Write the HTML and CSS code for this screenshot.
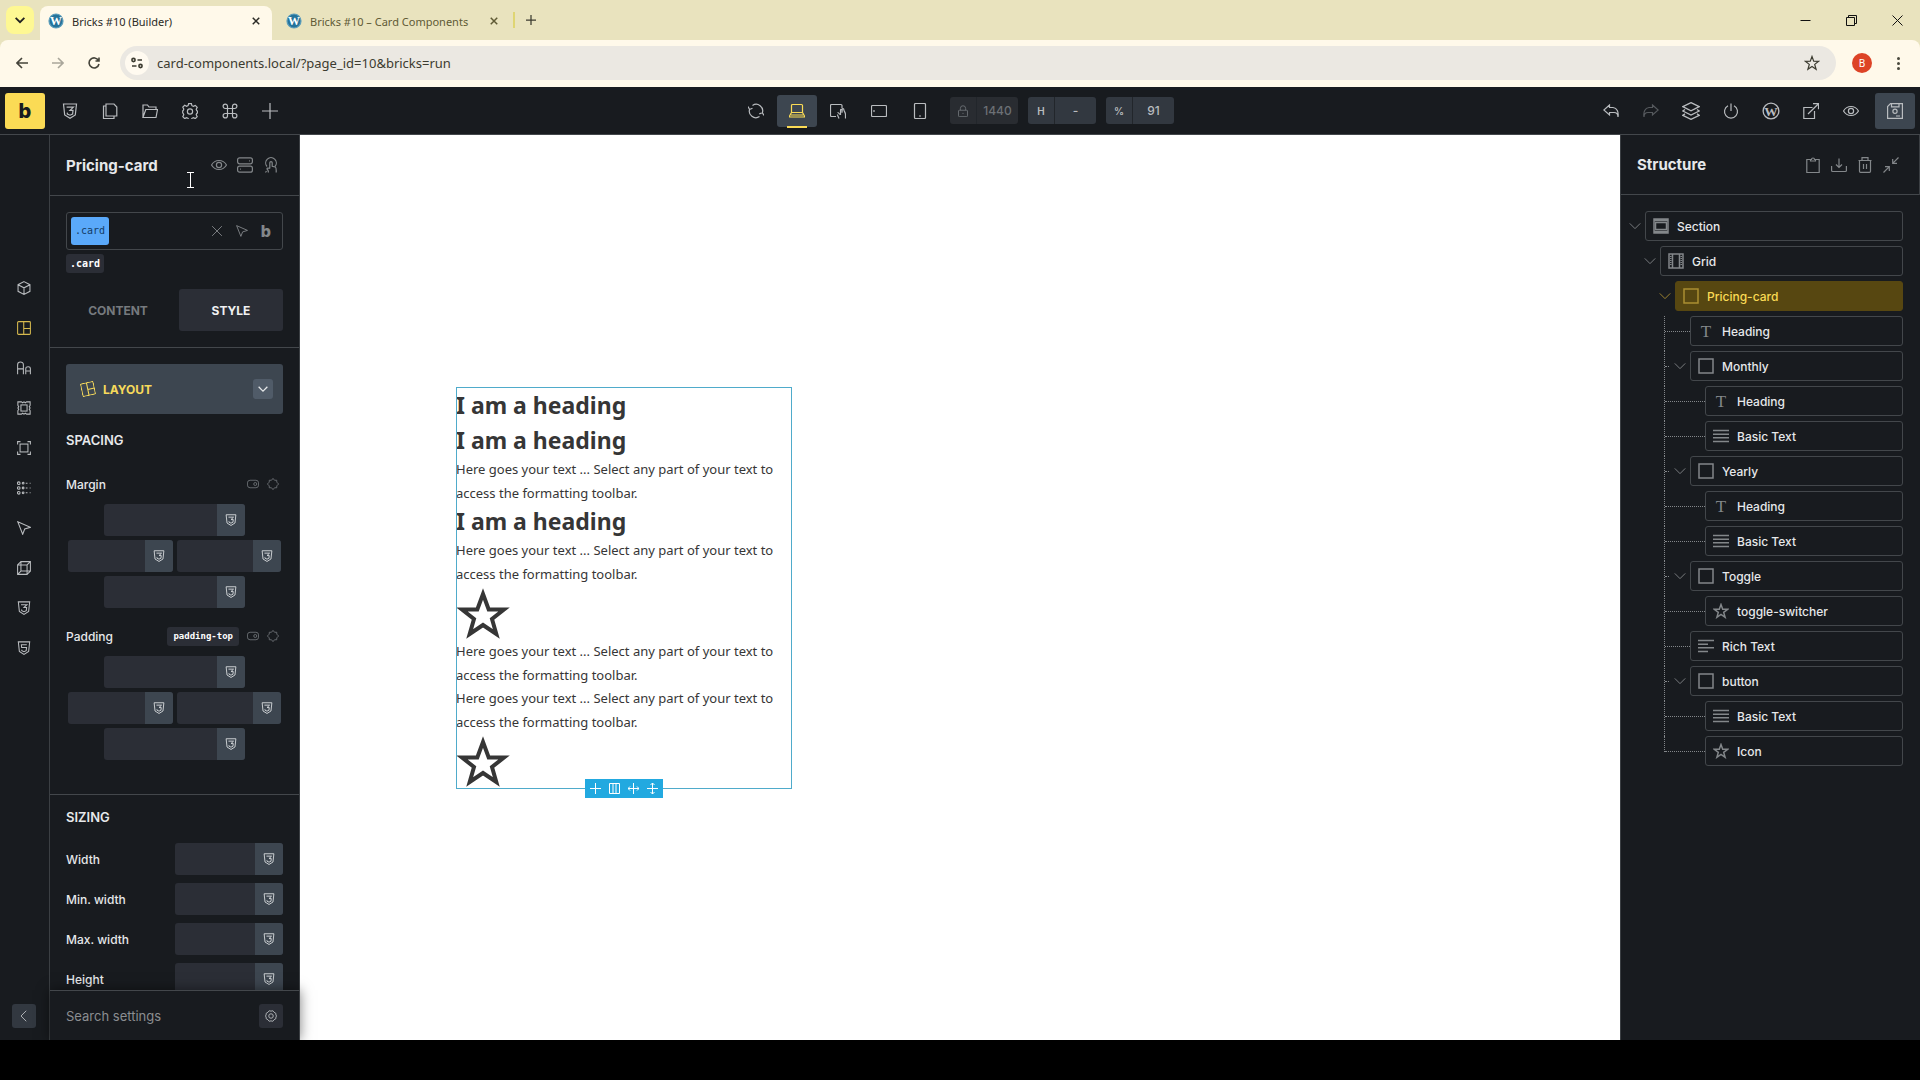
FILE: index.html
```html
<!DOCTYPE html>
<html lang="en">
<head>
<meta charset="UTF-8" />
<meta name="viewport" content="width=device-width, initial-scale=1" />
<title>Bricks #10 (Builder)</title>
<link rel="stylesheet" href="styles.css">
</head>

<body>

<!-- icon sprite -->
<svg class="sprite" aria-hidden="true">
  <symbol id="i-css" viewBox="0 0 16 16"><path d="M1.5 1h13l-1.2 11L8 15.3 2.7 12z"/><path d="M4.6 4.2h6.8L8 7.4h3l-.4 3.6L8 12.2 5.400 11l-.2-1.300"/></symbol>
  <symbol id="i-html" viewBox="0 0 16 16"><path d="M1.5 1h13l-1.2 11L8 15.3 2.7 12z"/><path d="M11.200 4.200H5l.3 3.200h5.600l-.4 3.600L8 12.200 5.500 11l-.1-1"/></symbol>
  <symbol id="i-pages" viewBox="0 0 16 16"><path d="M4 1h8l2.800 3v9H4zM4 3H1.500v12.500H12V13"/></symbol>
  <symbol id="i-folder" viewBox="0 0 16 16"><path d="M1 14V2h4.500l1.500 2h7v2.500M1 14.300 3.800 6.500h11.700l-1.500 8z"/></symbol>
  <symbol id="i-gear" viewBox="0 0 16 16"><path d="M6.600.7h2.800l.5 2 1.500.7 1.900-1 1.900 1.900-1 1.900.6 1.500.7.300v2l-.7.300-.6 1.500 1 1.900-1.900 1.900-1.900-1-1.500.7-.5 2H6.600l-.5-2-1.500-.7-1.900 1-1.900-1.900 1-1.900-.6-1.500-.5-.3V7.900l.5-.3.6-1.500-1-1.900 1.900-1.900 1.900 1 1.500-.7z"/><circle cx="8" cy="8.500" r="2.600"/></symbol>
  <symbol id="i-cmd" viewBox="0 0 16 16"><path d="M5.500 5.500h5v5h-5zM5.500 5.500V3.300a2.200 2.200 0 1 0-2.200 2.200zM10.500 5.500V3.300a2.200 2.200 0 1 1 2.200 2.200zM5.500 10.500v2.200a2.200 2.200 0 1 1-2.200-2.200zM10.500 10.500v2.200a2.200 2.200 0 1 0 2.200-2.200z"/></symbol>
  <symbol id="i-plus" viewBox="0 0 16 16"><path d="M8 0v16M0 8h16"/></symbol>
  <symbol id="i-sync" viewBox="0 0 16 16"><path d="M4.500 2.500a6.500 6.500 0 0 1 9.800 7.500M11.500 13.500A6.500 6.500 0 0 1 1.700 6M0 3.500l1.500 3 3-1.200M16 12.500l-1.700-2.800-3 1.200"/></symbol>
  <symbol id="i-laptop" viewBox="0 0 16 16"><path d="M2.500 9.500v-7a1 1 0 0 1 1-1h9a1 1 0 0 1 1 1v7zM2.500 9.500.6 13v1h14.800v-1l-1.900-3.500M2 12h12"/></symbol>
  <symbol id="i-touch" viewBox="0 0 16 16"><path d="M6 13.500H1.500a1 1 0 0 1-1-1v-10a1 1 0 0 1 1-1H11a1 1 0 0 1 1 1V5M7.500 9.500c1.500 0 1.500 2 3 2V7.200c0-1 1.500-1 1.500 0v2.500M12 9.700l.2-3.200c0-1.300 1.600-1 1.600 0 .2 2 1.700 3 1.700 5v4M9 15.500c-.5-2-1.500-2.500-1.500-4"/></symbol>
  <symbol id="i-land" viewBox="0 0 16 16"><rect x=".5" y="2.500" width="15" height="11" rx="1"/><path d="M3 7v2"/></symbol>
  <symbol id="i-phone" viewBox="0 0 16 16"><rect x="2.500" y=".5" width="11" height="15" rx="1"/><path d="M7 13h2"/></symbol>
  <symbol id="i-lock" viewBox="0 0 16 16"><rect x="2" y="7" width="12" height="8.500" rx="1"/><path d="M4.500 7V4.500a3.500 3.500 0 0 1 7 0V7M8 10.500v1.500"/></symbol>
  <symbol id="i-undo" viewBox="0 0 16 16"><path d="M6.500 2 .8 7l5.700 5V9.500H11c2.500 0 4 1.500 4 4.500.8-5-1-9-5-9.500H6.500z"/></symbol>
  <symbol id="i-redo" viewBox="0 0 16 16"><path d="m9.500 2 5.700 5-5.700 5V9.500H5c-2.500 0-4 1.500-4 4.500-.8-5 1-9 5-9.500h3.500z"/></symbol>
  <symbol id="i-layers" viewBox="0 0 16 16"><path d="m8 .6 7.300 3.600L8 7.800.7 4.200zM2.700 6.700.7 8 8 11.600 15.300 8l-2-1.300M2.700 10.500l-2 1.300L8 15.400l7.300-3.600-2-1.300"/></symbol>
  <symbol id="i-power" viewBox="0 0 16 16"><path d="M5 2.800a6.500 6.500 0 1 0 6 0M8 .5V8"/></symbol>
  <symbol id="i-ext" viewBox="0 0 16 16"><path d="M9.500 4.500H.8v11h10.700V8M5 11 15.500.7M10 .7h5.500v5.500"/></symbol>
  <symbol id="i-eye" viewBox="0 0 16 16"><path d="M.5 8C4 2 12 2 15.500 8 12 14 4 14 .5 8z"/><circle cx="8" cy="8" r="2.600"/></symbol>
  <symbol id="i-save" viewBox="0 0 16 16"><path d="M3.500.6h11.900v14.800H.6V3.500zM4.500.8v3h7.500v-3M9 13h4"/><circle cx="8" cy="8.300" r="2.100"/></symbol>
  <symbol id="i-clip" viewBox="0 0 16 16"><path d="M5.500 2.500H1.800v13h12.400v-13h-3.700M5.500 4V2.500h1a1.500 1.500 0 0 1 3 0h1V4z"/></symbol>
  <symbol id="i-down" viewBox="0 0 16 16"><path d="M8 1.500v9M5 7.500l3 3 3-3M.6 9v4.500a1 1 0 0 0 1 1h12.800a1 1 0 0 0 1-1V9"/></symbol>
  <symbol id="i-trash" viewBox="0 0 16 16"><path d="M1.500 3.500h13M5 3.500V.7h6v2.800M2.500 3.500v10.800a1 1 0 0 0 1 1h9a1 1 0 0 0 1-1V3.500M6.500 7v5M9.500 7v5"/></symbol>
  <symbol id="i-shrink" viewBox="0 0 16 16"><path d="M15.500.5 9.700 6.300M9.700 2v4.300H14M.5 15.500l5.800-5.800M2 9.700h4.300V14"/></symbol>
  <symbol id="i-switches" viewBox="0 0 16 16"><rect x=".6" y=".8" width="14.800" height="6" rx="2"/><rect x=".6" y="9.200" width="14.800" height="6" rx="2"/><path d="M12 3.800h.8M3.200 12.200H4"/></symbol>
  <symbol id="i-hand" viewBox="0 0 16 16"><path d="M4 9.500a5.300 5.300 0 1 1 8 0M6.800 11.500V5.700c0-1.500 2.400-1.500 2.400 0v3.600l3 .7c1.300.5 1 2 1 5.500M6.800 11.500 5 11c-1.500 0-1 1.500 0 2.200l.5 2.300M3.500 14l-1 1.500"/></symbol>
  <symbol id="i-x" viewBox="0 0 16 16"><path d="m1.500 1.500 13 13M14.500 1.500l-13 13"/></symbol>
  <symbol id="i-cursor" viewBox="0 0 16 16"><path d="m.8.800 14.500 6.400-6.500 2-2.300 6z"/></symbol>
  <symbol id="i-cube" viewBox="0 0 16 16"><path d="m8 .7 6.800 3.500v7.600L8 15.300l-6.800-3.500V4.200zM1.200 4.200 8 7.800l6.800-3.600M8 7.800v7.500"/></symbol>
  <symbol id="i-layout" viewBox="0 0 16 16"><rect x=".7" y=".7" width="14.600" height="14.600" rx="1"/><path d="M7.700.7v14.600M7.700 8.500h7.600"/></symbol>
  <symbol id="i-type" viewBox="0 0 16 16"><path d="M.7 15V4.200C.7 0 7.300 0 7.300 4.200V15M.7 9h6.600M10 15V8.800c0-3 5.300-3 5.300 0V15M10 11.500h5.300"/></symbol>
  <symbol id="i-bg" viewBox="0 0 16 16"><rect x="4.500" y="4.500" width="7" height="7"/><path d="M1 5V1h4l1.500 1L8 1l1.500 1L11 1h4v4l-1 1.500L15 8l-1 1.500 1 1.500v4h-4l-1.500-1L8 15l-1.500-1L5 15H1v-4l1-1.500L1 8l1-1.500z"/></symbol>
  <symbol id="i-border" viewBox="0 0 16 16"><rect x="3.500" y="3.500" width="9" height="9"/><path d="M.7 4V.7H4M12 .7h3.300V4M15.300 12v3.300H12M4 15.300H.7V12"/></symbol>
  <symbol id="i-dots" viewBox="0 0 16 16"><circle cx="2" cy="2.500" r="1.500"/><circle cx="2" cy="8" r="1.500"/><circle cx="2" cy="13.500" r="1.500"/><circle cx="7" cy="2.500" r="1"/><circle cx="7" cy="8" r="1"/><circle cx="7" cy="13.500" r="1"/><path d="M10 2.500h2M10 8h2M10 13.500h2M14.500 2.500h1M14.500 8h1M14.500 13.500h1"/></symbol>
  <symbol id="i-box3d" viewBox="0 0 16 16"><path d="M.7 4.500h10.800v10.800H.7zM4.500.7h10.800v10.800H4.500zM.7 4.500 4.500.7M11.500 4.500 15.300.7M.7 15.300l3.800-3.800M11.500 15.300l3.800-3.800"/></symbol>
  <symbol id="i-left" viewBox="0 0 16 16"><path d="M11 1 4 8l7 7"/></symbol>
  <symbol id="i-chev" viewBox="0 0 16 16"><path d="m1 4.500 7 7 7-7"/></symbol>
  <symbol id="i-toggle" viewBox="0 0 16 16"><rect x=".6" y="3" width="14.800" height="10" rx="3.500"/><circle cx="11" cy="8" r="2"/></symbol>
  <symbol id="i-sides" viewBox="0 0 16 16"><path d="M3 5.500V3h3l2-2.500L10 3h3v2.500L15.500 8 13 10.500V13h-3l-2 2.500L6 13H3v-2.500L.5 8z"/></symbol>
  <symbol id="i-nut" viewBox="0 0 16 16"><path d="m5.500 1 2.500.5 2.500-.5 1.500 2 2.500 1.500v2.200L15.500 8l-1 1.300v2.200L12 13l-1.500 2-2.500-.5-2.500.5L4 13l-2.500-1.500V9.300L.5 8l1-1.300V4.500L4 3z"/><circle cx="8" cy="8" r="3"/></symbol>
  <symbol id="i-section" viewBox="0 0 16 16"><path d="M1 1h14v14H1zM1 2.500h14M1 13.500h14"/><rect x="2.500" y="4.500" width="11" height="7"/></symbol>
  <symbol id="i-grid" viewBox="0 0 16 16"><rect x="1" y="1" width="14" height="14"/><path d="M4.500 1v14M11.500 1v14"/><path d="M2.800 3v10M13.200 3v10" stroke-dasharray="1 1"/></symbol>
  <symbol id="i-div" viewBox="0 0 16 16"><rect x="1" y="1" width="14" height="14"/></symbol>
  <symbol id="i-basic" viewBox="0 0 16 16"><path d="M0 2.500h16M0 6.200h16M0 9.800h16M0 13.500h16"/></symbol>
  <symbol id="i-rich" viewBox="0 0 16 16"><path d="M0 2.500h16M0 6.200h10M0 9.800h16M0 13.500h10"/></symbol>
  <symbol id="i-star" viewBox="0 0 16 16"><path d="m8 1.500 1.700 4.700 5 .1-4 3.100 1.400 4.900L8 11.500l-4.100 2.800 1.400-4.900-4-3.100 5-.1z"/></symbol>
  <symbol id="i-bigstar" viewBox="0 0 55 55"><path d="m27 9 5.700 15.500H48L36 34l4.300 15L27 40 13.700 49 18 34 6 24.500h15.300z"/></symbol>
</svg>

<header class="chrome">
  <div class="tabstrip">
    <button class="tab-search" aria-label="Search tabs"><svg class="icon s10"><use href="#i-chev"/></svg></button>
    <div class="tab active">
      <svg class="icon s16 favicon" viewBox="0 0 16 16"><circle cx="8" cy="8" r="7"/><text x="8" y="12">W</text></svg>
      <span class="tab-title">Bricks #10 (Builder)</span>
      <button aria-label="Close tab"><svg class="icon s8"><use href="#i-x"/></svg></button>
    </div>
    <div class="tab">
      <svg class="icon s16 favicon" viewBox="0 0 16 16"><circle cx="8" cy="8" r="7"/><text x="8" y="12">W</text></svg>
      <span class="tab-title">Bricks #10 – Card Components</span>
      <button aria-label="Close tab"><svg class="icon s8"><use href="#i-x"/></svg></button>
    </div>
    <button class="new-tab" aria-label="New tab"><svg class="icon s10"><use href="#i-plus"/></svg></button>
    <div class="window-controls">
      <button aria-label="Minimize"><svg viewBox="0 0 11 11"><path d="M.5 5.500h10"/></svg></button>
      <button aria-label="Restore"><svg viewBox="0 0 11 11"><path d="M.5 2.500h8v8h-8zM2.500 2.500v-2h8v8h-2"/></svg></button>
      <button aria-label="Close"><svg viewBox="0 0 11 11"><path d="m.5.500 10 10M10.500.5l-10 10"/></svg></button>
    </div>
  </div>

  <div class="navbar">
    <button class="nav" aria-label="Back"><svg viewBox="0 0 12 12"><path d="M12 6H1M6 1 1 6l5 5"/></svg></button>
    <button class="nav off" aria-label="Forward"><svg viewBox="0 0 12 12"><path d="M0 6h11M6 1l5 5-5 5"/></svg></button>
    <button class="nav" aria-label="Reload"><svg viewBox="0 0 12 12"><path d="M10.500 3.500A5 5 0 1 0 11 7M11 .5V4H7.500"/></svg></button>
    <div class="omnibox">
      <button class="site-info" aria-label="Site information"><svg viewBox="0 0 12 12"><circle cx="2.500" cy="3" r="1.600"/><path d="M6.500 3H11M1 9h4.500"/><circle cx="9.500" cy="9" r="1.600"/></svg></button>
      <input type="text" value="card-components.local/?page_id=10&amp;bricks=run" aria-label="Address">
      <button aria-label="Bookmark"><svg class="icon s16"><use href="#i-star"/></svg></button>
    </div>
    <button class="avatar" aria-label="Profile">B</button>
    <button class="menu" aria-label="Menu"><i></i><i></i><i></i></button>
  </div>
</header>

<nav class="topbar">
  <div class="group">
    <button class="logo" aria-label="Bricks">b</button>
    <button aria-label="Global CSS"><svg class="icon s16"><use href="#i-css"/></svg></button>
    <button aria-label="Pages"><svg class="icon s16"><use href="#i-pages"/></svg></button>
    <button aria-label="Templates"><svg class="icon s16"><use href="#i-folder"/></svg></button>
    <button aria-label="Settings"><svg class="icon s16"><use href="#i-gear"/></svg></button>
    <button aria-label="Commands"><svg class="icon s16"><use href="#i-cmd"/></svg></button>
    <button aria-label="Add element"><svg class="icon s16"><use href="#i-plus"/></svg></button>
  </div>

  <div class="group center">
    <button aria-label="Reload canvas"><svg class="icon s16"><use href="#i-sync"/></svg></button>
    <button class="active" aria-label="Desktop"><svg class="icon s16"><use href="#i-laptop"/></svg></button>
    <button aria-label="Tablet"><svg class="icon s16"><use href="#i-touch"/></svg></button>
    <button aria-label="Mobile landscape"><svg class="icon s16"><use href="#i-land"/></svg></button>
    <button aria-label="Mobile portrait"><svg class="icon s16"><use href="#i-phone"/></svg></button>
    <div class="dims">
      <label class="dim off"><span><svg class="icon s12"><use href="#i-lock"/></svg></span><input type="text" value="1440" aria-label="Width" disabled></label>
      <label class="dim"><span>H</span><input type="text" value="-"></label>
      <label class="dim"><span>%</span><input type="text" value="91"></label>
    </div>
  </div>

  <div class="group right">
    <button aria-label="Undo"><svg class="icon s16"><use href="#i-undo"/></svg></button>
    <button class="off" aria-label="Redo"><svg class="icon s16"><use href="#i-redo"/></svg></button>
    <button aria-label="Structure"><svg class="icon s18"><use href="#i-layers"/></svg></button>
    <button aria-label="Power"><svg class="icon s16"><use href="#i-power"/></svg></button>
    <button aria-label="WordPress"><svg class="icon s18 wp" viewBox="0 0 16 16"><circle cx="8" cy="8" r="7"/><text x="8" y="12">W</text></svg></button>
    <button aria-label="View page"><svg class="icon s16"><use href="#i-ext"/></svg></button>
    <button aria-label="Preview"><svg class="icon s16"><use href="#i-eye"/></svg></button>
    <button class="save" aria-label="Save"><svg class="icon s16"><use href="#i-save"/></svg></button>
  </div>
</nav>

<main class="builder">
  <aside class="rail">
    <div class="rail-icons">
      <button aria-label="Content"><svg class="icon s14"><use href="#i-cube"/></svg></button>
      <button class="active" aria-label="Layout"><svg class="icon s14"><use href="#i-layout"/></svg></button>
      <button aria-label="Typography"><svg class="icon s14"><use href="#i-type"/></svg></button>
      <button aria-label="Background"><svg class="icon s14"><use href="#i-bg"/></svg></button>
      <button aria-label="Border"><svg class="icon s14"><use href="#i-border"/></svg></button>
      <button aria-label="Gradient"><svg class="icon s14"><use href="#i-dots"/></svg></button>
      <button aria-label="Shapes"><svg class="icon s14"><use href="#i-cursor"/></svg></button>
      <button aria-label="Transform"><svg class="icon s14"><use href="#i-box3d"/></svg></button>
      <button aria-label="CSS"><svg class="icon s14"><use href="#i-css"/></svg></button>
      <button aria-label="Attributes"><svg class="icon s14"><use href="#i-html"/></svg></button>
    </div>
    <button class="square slate" aria-label="Collapse"><svg class="icon s12"><use href="#i-left"/></svg></button>
  </aside>

  <section class="panel">
    <div class="panel-head">
      <h2>Pricing-card</h2>
      <div class="actions">
        <button aria-label="Visibility"><svg class="icon s16"><use href="#i-eye"/></svg></button>
        <button aria-label="Conditions"><svg class="icon s16"><use href="#i-switches"/></svg></button>
        <button aria-label="Interactions"><svg class="icon s16"><use href="#i-hand"/></svg></button>
      </div>
      <svg class="ibeam" viewBox="0 0 7 16"><path d="M0 .5h7M3.500 0v16M0 15.500h7"/></svg>
    </div>

    <div class="panel-body">
      <div class="block">
        <div class="class-box">
          <span class="chip">.card</span>
          <button aria-label="Clear"><svg class="icon s12"><use href="#i-x"/></svg></button>
          <button aria-label="States"><svg class="icon s12"><use href="#i-cursor"/></svg></button>
          <button class="b" aria-label="Class manager">b</button>
        </div>
        <code class="tag">.card</code>
        <div class="switch">
          <button>CONTENT</button>
          <button class="active">STYLE</button>
        </div>
      </div>

      <div class="block layout">
        <button class="accordion"><svg class="icon s14 tilt"><use href="#i-layout"/></svg>LAYOUT<span><svg class="icon s10"><use href="#i-chev"/></svg></span></button>
        <h3>SPACING</h3>
        <div class="control-head">
          <span>Margin</span>
          <svg class="icon s12"><use href="#i-toggle"/></svg>
          <svg class="icon s12"><use href="#i-sides"/></svg>
        </div>
        <div class="sides">
          <div class="field wide"><input type="text" aria-label="Margin top"><button aria-label="Variable"><svg class="icon s12"><use href="#i-css"/></svg></button></div>
          <div class="field"><input type="text" aria-label="Margin left"><button aria-label="Variable"><svg class="icon s12"><use href="#i-css"/></svg></button></div>
          <div class="field"><input type="text" aria-label="Margin right"><button aria-label="Variable"><svg class="icon s12"><use href="#i-css"/></svg></button></div>
          <div class="field wide"><input type="text" aria-label="Margin bottom"><button aria-label="Variable"><svg class="icon s12"><use href="#i-css"/></svg></button></div>
        </div>
        <div class="control-head second">
          <span>Padding</span>
          <code class="tag small">padding-top</code>
          <svg class="icon s12"><use href="#i-toggle"/></svg>
          <svg class="icon s12"><use href="#i-sides"/></svg>
        </div>
        <div class="sides">
          <div class="field wide"><input type="text" aria-label="Padding top"><button aria-label="Variable"><svg class="icon s12"><use href="#i-css"/></svg></button></div>
          <div class="field"><input type="text" aria-label="Padding left"><button aria-label="Variable"><svg class="icon s12"><use href="#i-css"/></svg></button></div>
          <div class="field"><input type="text" aria-label="Padding right"><button aria-label="Variable"><svg class="icon s12"><use href="#i-css"/></svg></button></div>
          <div class="field wide"><input type="text" aria-label="Padding bottom"><button aria-label="Variable"><svg class="icon s12"><use href="#i-css"/></svg></button></div>
        </div>
      </div>

      <div class="block sizing">
        <h3>SIZING</h3>
        <div class="size-row"><label for="width">Width</label><div class="field"><input type="text" id="width"><button aria-label="Variable"><svg class="icon s12"><use href="#i-css"/></svg></button></div></div>
        <div class="size-row"><label for="minWidth">Min. width</label><div class="field"><input type="text" id="minWidth"><button aria-label="Variable"><svg class="icon s12"><use href="#i-css"/></svg></button></div></div>
        <div class="size-row"><label for="maxWidth">Max. width</label><div class="field"><input type="text" id="maxWidth"><button aria-label="Variable"><svg class="icon s12"><use href="#i-css"/></svg></button></div></div>
        <div class="size-row"><label for="height">Height</label><div class="field"><input type="text" id="height"><button aria-label="Variable"><svg class="icon s12"><use href="#i-css"/></svg></button></div></div>
      </div>
    </div>

    <div class="panel-foot">
      <input type="text" placeholder="Search settings" aria-label="Search settings">
      <button class="square" aria-label="Settings"><svg class="icon s12"><use href="#i-nut"/></svg></button>
    </div>
  </section>

  <section class="canvas">
    <div class="container">
      <article class="card">
        <h1>I am a heading</h1>
        <h1>I am a heading</h1>
        <p>Here goes your text ... Select any part of your text to access the formatting toolbar.</p>
        <h1>I am a heading</h1>
        <p>Here goes your text ... Select any part of your text to access the formatting toolbar.</p>
        <svg class="big-star"><use href="#i-bigstar"/></svg>
        <p>Here goes your text ... Select any part of your text to access the formatting toolbar.</p>
        <p>Here goes your text ... Select any part of your text to access the formatting toolbar.</p>
        <svg class="big-star"><use href="#i-bigstar"/></svg>
        <div class="node-toolbar">
          <button aria-label="Add"><svg viewBox="0 0 11 11"><path d="M5.500 0v11M0 5.500h11"/></svg></button>
          <button aria-label="Columns"><svg viewBox="0 0 11 11"><path d="M.5.500h10v10H.5zM4 .5v10M7 .5v10"/></svg></button>
          <button aria-label="Stretch"><svg viewBox="0 0 11 11"><path d="M5.500 0v11M0 5.500h11M2 3.500l-2 2 2 2M9 3.500l2 2-2 2"/></svg></button>
          <button aria-label="Align"><svg viewBox="0 0 11 11"><path d="M0 5.500h11M5.500 0v11M3.500 2l2-2 2 2M3.500 9l2 2 2-2"/></svg></button>
        </div>
      </article>
    </div>
  </section>

  <aside class="structure">
    <div class="panel-head">
      <h2>Structure</h2>
      <div class="actions">
        <button aria-label="Paste"><svg class="icon s16"><use href="#i-clip"/></svg></button>
        <button aria-label="Import"><svg class="icon s16"><use href="#i-down"/></svg></button>
        <button aria-label="Delete"><svg class="icon s16"><use href="#i-trash"/></svg></button>
        <button aria-label="Collapse all"><svg class="icon s16"><use href="#i-shrink"/></svg></button>
      </div>
    </div>
    <ul class="tree">
      <li class="l0"><button class="fold" aria-label="Toggle"><svg class="icon s12"><use href="#i-chev"/></svg></button><a href="#"><svg class="icon s16"><use href="#i-section"/></svg>Section</a></li>
      <li class="l1"><button class="fold" aria-label="Toggle"><svg class="icon s12"><use href="#i-chev"/></svg></button><a href="#"><svg class="icon s16"><use href="#i-grid"/></svg>Grid</a></li>
      <li class="l2 active"><button class="fold" aria-label="Toggle"><svg class="icon s12"><use href="#i-chev"/></svg></button><a href="#"><svg class="icon s16"><use href="#i-div"/></svg>Pricing-card</a></li>
      <li class="l3"><i class="stem"></i><a href="#"><svg class="icon s16 letter" viewBox="0 0 16 16"><text x="8" y="14">T</text></svg>Heading</a></li>
      <li class="l3 open"><i class="stem"></i><button class="fold" aria-label="Toggle"><svg class="icon s12"><use href="#i-chev"/></svg></button><a href="#"><svg class="icon s16"><use href="#i-div"/></svg>Monthly</a></li>
      <li class="l4"><i class="stem"></i><a href="#"><svg class="icon s16 letter" viewBox="0 0 16 16"><text x="8" y="14">T</text></svg>Heading</a></li>
      <li class="l4"><i class="stem"></i><a href="#"><svg class="icon s16"><use href="#i-basic"/></svg>Basic Text</a></li>
      <li class="l3 open"><i class="stem"></i><button class="fold" aria-label="Toggle"><svg class="icon s12"><use href="#i-chev"/></svg></button><a href="#"><svg class="icon s16"><use href="#i-div"/></svg>Yearly</a></li>
      <li class="l4"><i class="stem"></i><a href="#"><svg class="icon s16 letter" viewBox="0 0 16 16"><text x="8" y="14">T</text></svg>Heading</a></li>
      <li class="l4"><i class="stem"></i><a href="#"><svg class="icon s16"><use href="#i-basic"/></svg>Basic Text</a></li>
      <li class="l3 open"><i class="stem"></i><button class="fold" aria-label="Toggle"><svg class="icon s12"><use href="#i-chev"/></svg></button><a href="#"><svg class="icon s16"><use href="#i-div"/></svg>Toggle</a></li>
      <li class="l4"><i class="stem"></i><a href="#"><svg class="icon s16"><use href="#i-star"/></svg>toggle-switcher</a></li>
      <li class="l3"><i class="stem"></i><a href="#"><svg class="icon s16"><use href="#i-rich"/></svg>Rich Text</a></li>
      <li class="l3 open"><i class="stem"></i><button class="fold" aria-label="Toggle"><svg class="icon s12"><use href="#i-chev"/></svg></button><a href="#"><svg class="icon s16"><use href="#i-div"/></svg>button</a></li>
      <li class="l4"><i class="stem"></i><a href="#"><svg class="icon s16"><use href="#i-basic"/></svg>Basic Text</a></li>
      <li class="l4 last"><i class="stem"></i><a href="#"><svg class="icon s16"><use href="#i-star"/></svg>Icon</a></li>
    </ul>
  </aside>
</main>

</body>
</html>
```

FILE: styles.css
```css
* {
  box-sizing: border-box;
}

body {
  margin: 0;
  height: 100vh;
  padding-bottom: 40px;
  display: flex;
  flex-direction: column;
  overflow: hidden;
  background: #000;
  color: #e6e8ea;
  font-family: Inter, sans-serif;
  font-size: 13px;
}

h1, h2, h3, p, ul {
  margin: 0;
  padding: 0;
}

button {
  display: flex;
  align-items: center;
  justify-content: center;
  flex: none;
  padding: 0;
  border: none;
  background: none;
  color: inherit;
  font: inherit;
  cursor: pointer;
}

input {
  min-width: 0;
  padding: 0;
  border: none;
  outline: none;
  background: none;
  color: inherit;
  font: inherit;
}

svg {
  flex: none;
  fill: none;
  stroke: currentColor;
}

.sprite {
  position: absolute;
  width: 0;
  height: 0;
}

.icon { stroke-width: 1.2; }
.s8 { width: 8px; height: 8px; }
.s10 { width: 10px; height: 10px; }
.s12 { width: 12px; height: 12px; }
.s14 { width: 14px; height: 14px; }
.s16 { width: 16px; height: 16px; }
.s18 { width: 18px; height: 18px; }

.icon text {
  fill: currentColor;
  stroke: none;
  font-family: "Liberation Serif", serif;
  font-size: 12px;
  font-weight: 700;
  text-anchor: middle;
}

.favicon {
  color: #fff;
}

.favicon circle {
  fill: #25739b;
  stroke: #5b9dbb;
}

.letter text {
  font-size: 17px;
  font-weight: 400;
}

/* browser window */
.chrome {
  background: #e9e3be;
  color: #3c3b30;
  font-family: "Noto Sans", sans-serif;
}

.tabstrip {
  display: flex;
  height: 40px;
  padding: 6px 0 0 6px;
}

.tab-search {
  width: 28px;
  height: 28px;
  margin-right: 6px;
  border-radius: 8px;
  background: #fef893;
  color: #222;
}

.tab-search .icon {
  stroke-width: 3;
}

.tab {
  display: flex;
  align-items: center;
  width: 232px;
  margin-right: 6px;
  padding: 0 12px 4px 8px;
  border-radius: 8px 8px 0 0;
  color: #5f5a35;
  font-size: 11px;
}

.tab.active {
  background: #fff9ea;
  color: #2b2b26;
}

.tab-title {
  flex: 1;
  padding-left: 8px;
  white-space: nowrap;
}

.tab .s8 {
  stroke-width: 3;
}

.new-tab {
  gap: 11px;
  width: 24px;
  height: 28px;
  margin-left: -4px;
}

.new-tab::before {
  content: "";
  width: 2px;
  height: 16px;
  background: #dfd573;
}

.new-tab .icon {
  stroke-width: 2;
}

.window-controls {
  display: flex;
  margin-left: auto;
  height: 28px;
  color: #111;
}

.window-controls button {
  width: 46px;
}

.window-controls svg {
  width: 11px;
  height: 11px;
}

.navbar {
  display: flex;
  align-items: center;
  height: 47px;
  padding: 0 14px 1px 4px;
  border-radius: 8px 8px 0 0;
  background: #fff9ea;
}

.nav {
  width: 36px;
  height: 34px;
  color: #45443a;
}

.nav.off {
  color: #aaa79b;
}

.nav svg {
  width: 12px;
  height: 12px;
  stroke-width: 1.6;
}

.omnibox {
  display: flex;
  align-items: center;
  flex: 1;
  height: 34px;
  margin: 0 16px 0 8px;
  padding: 0 16px 0 5px;
  border-radius: 17px;
  background: #ebe8e2;
}

.site-info {
  width: 24px;
  height: 24px;
  border-radius: 12px;
  background: #fffaf0;
}

.site-info svg {
  width: 12px;
  height: 12px;
  stroke-width: 1.6;
}

.omnibox input {
  flex: 1;
  margin-left: 8px;
  font-size: 13px;
}

.avatar {
  width: 20px;
  height: 20px;
  border-radius: 10px;
  background: #dd4326;
  color: #fff;
  font-size: 10px;
}

.menu {
  flex-direction: column;
  gap: 2px;
  width: 16px;
  margin-left: 18px;
}

.menu i {
  width: 3px;
  height: 3px;
  border-radius: 2px;
  background: #4a493d;
}

/* builder toolbar */
.topbar {
  display: grid;
  grid-template-columns: 1fr auto 1fr;
  height: 48px;
  padding: 0 5px;
  border-bottom: 1px solid #43474b;
  background: #181b1f;
  color: #b9bcbf;
}

.group {
  display: flex;
  align-items: center;
}

.group button {
  width: 40px;
  height: 36px;
}

.group .logo {
  margin-right: 5px;
  border-radius: 3px;
  background: #fbdb55;
  color: #181b1f;
  font-size: 20px;
  font-weight: 800;
}

.center {
  gap: 1px;
  padding-right: 10px;
}

.center button {
  height: 32px;
}

.center .active {
  position: relative;
  border-radius: 3px;
  background: #3d4650;
  color: #fbdb55;
}

.center .active::after {
  content: "";
  position: absolute;
  bottom: -1px;
  left: 10px;
  width: 20px;
  height: 2px;
  background: #fbdb55;
}

.dims {
  display: flex;
  gap: 10px;
  margin-left: 9px;
}

.dim {
  display: flex;
  width: 68px;
  height: 27px;
  border-radius: 3px;
  background: #323840;
  font-size: 12px;
  font-weight: 500;
}

.dim span {
  display: flex;
  align-items: center;
  justify-content: center;
  width: 27px;
  border-right: 1px solid #22262b;
  font-size: 10px;
  font-weight: 600;
}

.dim input {
  flex: 1;
  text-align: center;
}

.dim.off {
  background: #292c31;
  color: #6c7075;
}

.right {
  justify-content: flex-end;
}

.right .off {
  color: #55595d;
}

.right .save {
  border-radius: 3px;
  background: #3d4650;
  margin-left: 4px;
}

/* left side */
.builder {
  display: flex;
  flex: 1;
  min-height: 0;
}

.rail {
  display: flex;
  flex-direction: column;
  align-items: center;
  justify-content: space-between;
  width: 50px;
  padding: 133px 1px 12px 0;
  border-right: 1px solid #3b3f43;
  background: #181b1f;
  color: #b9bcbf;
}

.rail-icons button {
  width: 40px;
  height: 40px;
}

.rail-icons .active {
  color: #d6b94e;
}

.square {
  width: 24px;
  height: 24px;
  border-radius: 3px;
  background: #2b2e36;
  color: #b9bcbf;
}

.slate {
  background: #323840;
}

.panel {
  display: flex;
  flex-direction: column;
  width: 250px;
  background: #181b1f;
}

.panel-head {
  position: relative;
  display: flex;
  align-items: center;
  justify-content: space-between;
  flex: none;
  height: 61px;
  padding: 0 20px 0 16px;
  border-right: 1px solid #3b3f43;
  border-bottom: 1px solid #43474b;
}

.panel-head h2 {
  font-size: 15px;
  font-weight: 700;
}

.actions {
  display: flex;
  gap: 10px;
  color: #83878a;
}

.ibeam {
  position: absolute;
  top: 37px;
  left: 137px;
  width: 7px;
  height: 16px;
  stroke: #fff;
}

.panel-body {
  flex: 1;
  min-height: 0;
  overflow: hidden;
  border-right: 1px solid #3b3f43;
}

.block {
  padding: 16px;
  border-bottom: 1px solid #43474b;
}

.class-box {
  display: flex;
  align-items: center;
  gap: 13px;
  height: 38px;
  margin-bottom: 4px;
  padding: 0 11px 0 4px;
  border: 1px solid #43474b;
  border-radius: 3px;
  color: #83878a;
}

.chip {
  margin-right: auto;
  padding: 0 4px;
  border-radius: 3px;
  background: #5aa9fa;
  color: #143c66;
  font-family: "DejaVu Sans Mono", monospace;
  font-size: 10px;
  line-height: 28px;
}

.class-box .b {
  font-size: 16px;
  font-weight: 800;
}

.tag {
  display: inline-block;
  padding: 0 4px;
  border-radius: 3px;
  background: #2b2e36;
  color: #fff;
  font-family: "DejaVu Sans Mono", monospace;
  font-size: 10px;
  font-weight: 700;
  line-height: 19px;
  vertical-align: top;
}

.tag.small {
  padding: 0 6px;
  font-size: 9px;
}

.switch {
  display: flex;
  gap: 9px;
  margin-top: 16px;
}

.switch button {
  flex: 1;
  height: 42px;
  border-radius: 3px;
  color: #767a7e;
  font-size: 12px;
  font-weight: 700;
}

.switch .active {
  background: #2b2e36;
  color: #f0f1f2;
}

.layout {
  padding-bottom: 34px;
}

.accordion {
  justify-content: flex-start;
  gap: 8px;
  width: 100%;
  height: 50px;
  padding: 0 10px 0 15px;
  border-radius: 3px;
  background: #3d4650;
  color: #f7da5b;
  font-size: 12px;
  font-weight: 700;
}

.accordion span {
  display: flex;
  align-items: center;
  justify-content: center;
  width: 20px;
  height: 20px;
  margin-left: auto;
  border-radius: 3px;
  background: #505b68;
  color: #e6e8ea;
}

.accordion .s10 {
  stroke-width: 2;
}

.tilt {
  transform: rotate(-12deg);
}

h3 {
  margin-top: 16px;
  font-size: 13px;
  font-weight: 600;
  line-height: 20px;
}

.control-head {
  display: flex;
  align-items: center;
  gap: 8px;
  height: 20px;
  margin: 24px 4px 10px 0;
  color: #6c7075;
}

.control-head.second {
  margin-top: 18px;
}

.control-head span {
  margin-right: auto;
  color: #e6e8ea;
  font-size: 12px;
  font-weight: 500;
}

.sides {
  display: grid;
  grid-template-columns: 1fr 1fr;
  gap: 4px;
  margin: 0 2px;
}

.field {
  display: flex;
  height: 32px;
  border-radius: 3px;
  overflow: hidden;
  background: #2b2e36;
}

.field input {
  flex: 1;
}

.field button {
  width: 28px;
  background: #3d4650;
  color: #d8dbde;
}

.wide {
  grid-column: 1 / 3;
  justify-self: center;
  width: 141px;
}

.sizing {
  padding-top: 12px;
}

.sizing h3 {
  margin: 0 0 16px;
}

.size-row {
  display: flex;
  align-items: center;
  justify-content: space-between;
  margin-bottom: 8px;
  font-size: 12px;
  font-weight: 500;
}

.size-row .field {
  width: 108px;
}

.panel-foot {
  position: relative;
  z-index: 1;
  display: flex;
  align-items: center;
  justify-content: space-between;
  flex: none;
  height: 50px;
  padding: 0 16px;
  border-top: 1px solid #43474b;
  border-right: 1px solid #3b3f43;
  background: #181b1f;
  box-shadow: 0 0 12px rgba(0, 0, 0, 0.5);
}

.panel-foot input {
  flex: 1;
  font-size: 13px;
}

.panel-foot input::placeholder {
  color: #8b8e91;
}

/* canvas */
.canvas {
  display: flex;
  align-items: center;
  justify-content: center;
  flex: 1;
  background: #fff;
  color: #363636;
  font-family: "Noto Sans", sans-serif;
}

.container {
  display: grid;
  grid-template-columns: repeat(3, 1fr);
  width: 100%;
  max-width: 1008px;
}

.card {
  position: relative;
  padding: 1px 0;
  outline: 1px solid #4fabcb;
  outline-offset: -1px;
}

.card h1 {
  font-size: 23px;
  line-height: 35px;
}

.card p {
  margin: -1px 0;
  font-size: 13px;
  line-height: 24px;
}

.big-star {
  display: block;
  width: 55px;
  height: 55px;
  stroke-width: 4;
}

.node-toolbar {
  position: absolute;
  bottom: -9px;
  left: 50%;
  display: flex;
  transform: translateX(-50%);
  padding: 0 1px;
  background: #22a9e0;
  color: #fff;
}

.node-toolbar button {
  width: 19px;
  height: 19px;
}

.node-toolbar svg {
  width: 11px;
  height: 11px;
}

/* structure */
.structure {
  width: 300px;
  border-left: 1px solid #3b3f43;
  background: #181b1f;
}

.structure .panel-head {
  height: 60px;
}

.tree {
  padding: 16px 17px 0 8px;
  list-style: none;
}

.tree li {
  display: flex;
  height: 35px;
}

.tree a {
  display: flex;
  align-items: center;
  gap: 8px;
  flex: 1;
  height: 30px;
  padding-left: 7px;
  border: 1px solid #43474b;
  border-radius: 3px;
  color: #e6e8ea;
  font-size: 12px;
  font-weight: 500;
  text-decoration: none;
}

.tree a svg {
  color: #83878a;
  stroke-width: 1.5;
}

.fold {
  width: 12px;
  height: 30px;
  margin-right: 4px;
  color: #83878a;
}

.tree .l1 { padding-left: 15px; }
.tree .l2 { padding-left: 30px; }
.tree .l3, .tree .l4 { padding-left: 35px; }

.tree .active a {
  border-color: #574711;
  background: #574711;
  color: #fbdb55;
}

.tree .active svg {
  color: #ab8f32;
}

.stem {
  display: flex;
  align-items: center;
  width: 26px;
  padding-bottom: 5px;
  border-left: 1px dotted #83878a;
}

.stem::after {
  content: "";
  flex: 1;
  border-top: 1px dotted #83878a;
}

.l4 .stem {
  width: 41px;
}

.open .stem {
  width: 10px;
  padding-right: 5px;
}

.last .stem {
  height: 16px;
  padding-bottom: 0;
  align-items: flex-end;
}
```
